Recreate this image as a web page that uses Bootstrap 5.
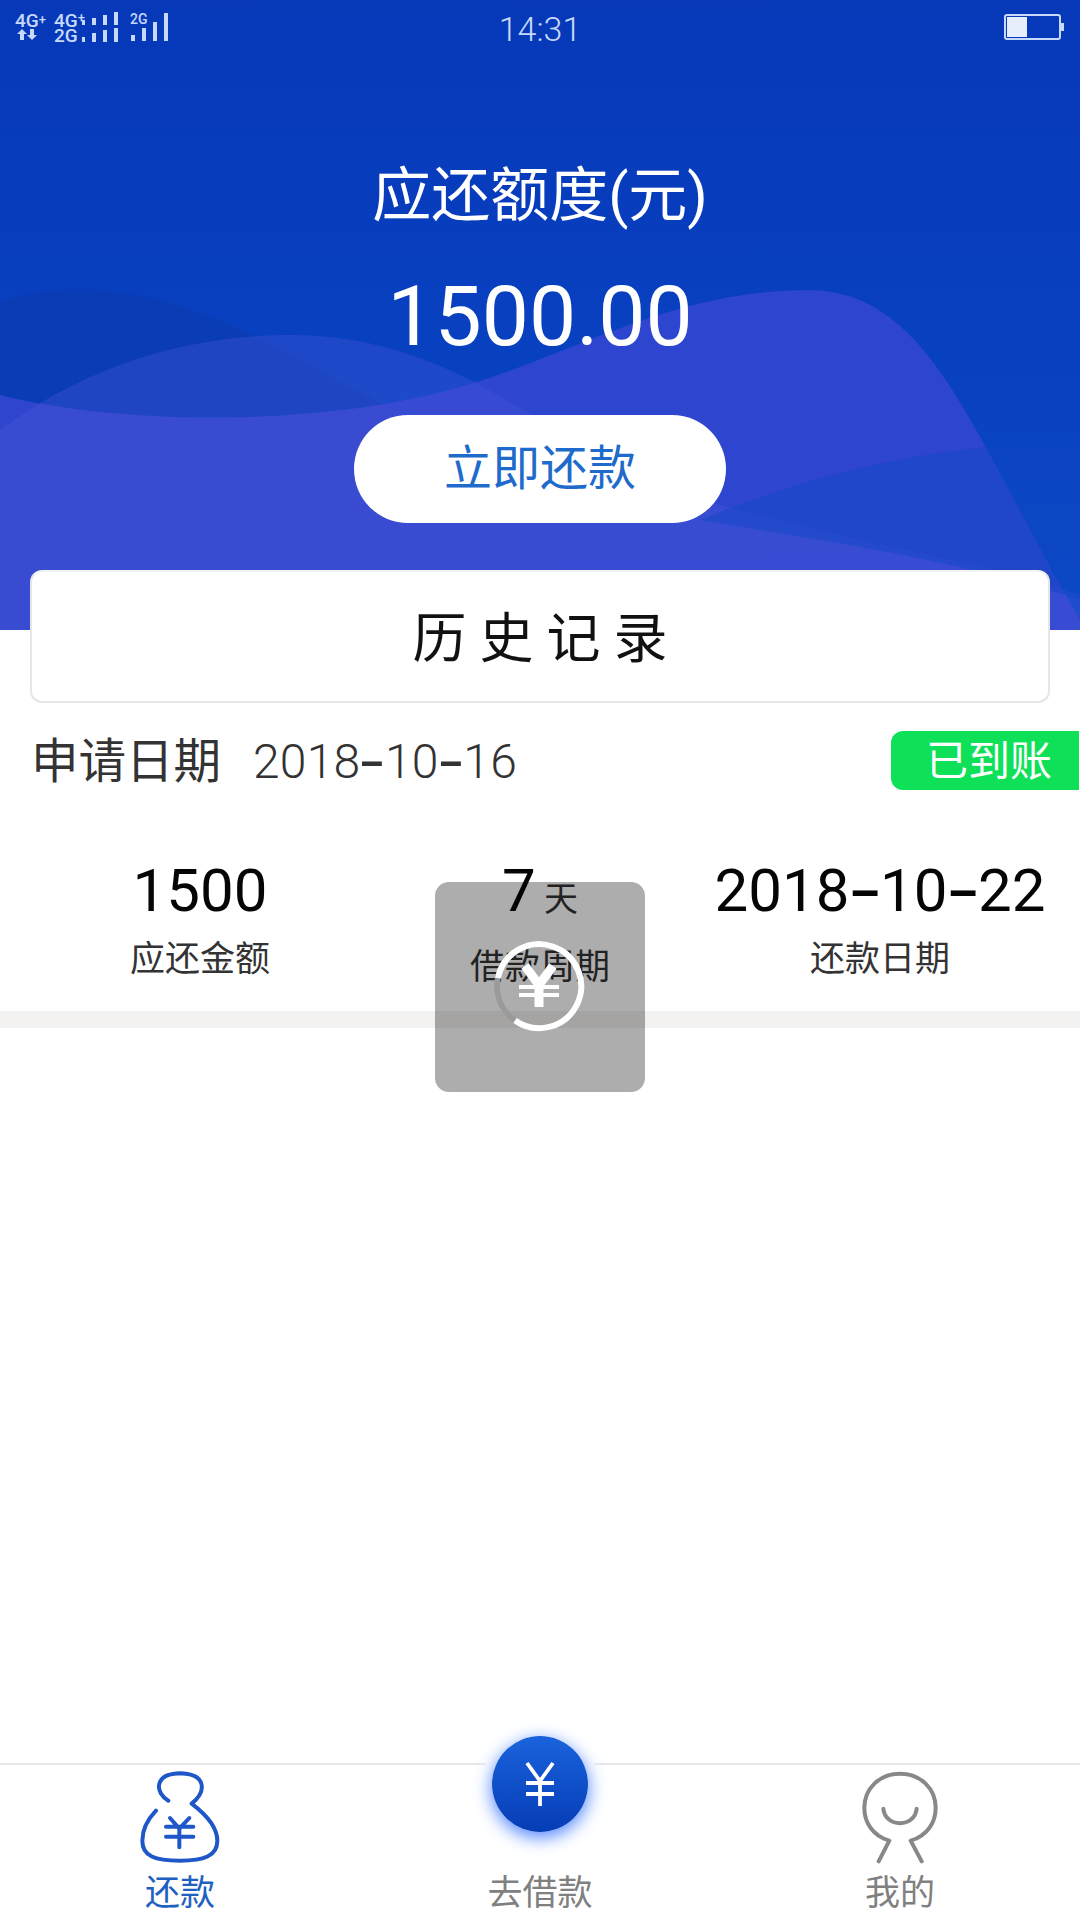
<!DOCTYPE html>
<html lang="zh-CN">
<head>
    <meta charset="UTF-8">
    <meta name="viewport" content="width=device-width, initial-scale=1.0">
    <title>还款</title>
    <link href="https://cdn.jsdelivr.net/npm/bootstrap@5.3.0/dist/css/bootstrap.min.css" rel="stylesheet">
    <style>
        body { font-family: Roboto, "Noto Sans CJK SC", sans-serif; background: #fff; height: 1920px; overflow: hidden; }
        .app-page { height: 1920px; }

        .hero { height: 630px; background: linear-gradient(180deg, #0638b8 0%, #0a48c6 100%); color: #fff; }
        .hero-waves { position: absolute; left: 0; top: 0; width: 1080px; height: 630px; }
        .hero-body { z-index: 1; }

        .status-line { height: 60px; color: #c6d9fb; }
        .status-side { width: 250px; }
        .status-time { font-size: 34px; font-weight: 300; padding-top: 4px; }

        .due-title { font-size: 59px; line-height: 80px; margin-top: 96px; font-weight: 400; }
        .due-amount { font-size: 84px; line-height: 100px; margin-top: 31px; font-weight: 400; }
        .repay-btn { width: 372px; height: 108px; margin-top: 48px; font-size: 48px; line-height: 108px; padding: 0; color: #1f6bcb; background: #fff; border: 0; border-radius: 54px; }

        .history-card { height: 133px; margin: -60px 30px 0; padding: 6px 0 0 13px; border: 2px solid #e6e6e6; border-top-color: #f3f3f3; border-radius: 12px; font-size: 54px; letter-spacing: 13px; color: #111; z-index: 2; }

        .record-head { margin-top: 28px; height: 59px; padding: 0 1px 0 31px; color: #333; }
        .record-text { padding-top: 4px; }
        .record-label { font-size: 47.500px; }
        .record-date { font-size: 48px; font-weight: 300; margin-left: 32px; color: #333; letter-spacing: .2px; }
        .wide-dash { display: inline-block; transform: scaleX(1.6); margin: 0 .085em; font-weight: 500; }
        .paid-tag { width: 188px; height: 59px; font-size: 42px; line-height: 62px; padding-left: 35px; background: #0ee157; color: #fff; border-radius: 12px 0 0 12px; }

        .stat-row { margin-top: 66px; padding: 0 30px; }
        .stat-cell { width: 340px; text-align: center; }
        .stat-num { font-size: 60px; line-height: 70px; color: #050505; }
        .stat-unit { font-size: 34px; color: #333; }
        .stat-label { font-size: 35px; line-height: 50px; margin-top: 9px; color: #333; }
        .split-band { height: 17px; margin-top: 18px; background: #f3f2f1; }

        .loading-toast { position: absolute; left: 435px; top: 882px; width: 210px; height: 210px; border-radius: 14px; background: rgba(0, 0, 0, .32); z-index: 5; }

        .tab-bar { height: 157px; border-top: 2px solid #e6e6e6; }
        .tab-cell { width: 360px; height: 155px; }
        .tab-text { position: absolute; left: 0; right: 0; top: 104px; font-size: 35px; line-height: 50px; text-align: center; color: #808080; }
        .tab-text-on { color: #2060c0; }
        .tab-icon { position: absolute; }
        .tab-bag { left: 130px; top: 3px; width: 100px; height: 100px; }
        .tab-person { left: 130px; top: 3px; width: 100px; height: 100px; }
        .borrow-halo { position: absolute; left: 122px; top: -38px; width: 116px; height: 116px; border-radius: 50%; background: #fff; box-shadow: 0 0 8px rgba(255, 255, 255, .9); }
        .borrow-btn { position: absolute; left: 132px; top: -29px; width: 96px; height: 96px; border-radius: 50%; background: linear-gradient(180deg, #1a63dc, #063db6); box-shadow: 0 5px 18px #4a80ff; }
    </style>
</head>
<body>
<div class="app-page d-flex flex-column position-relative">

    <div class="hero position-relative overflow-hidden">
        <svg class="hero-waves" viewBox="0 0 1080 630">
            <path d="M0 302 C60 280 140 285 230 325 C340 375 420 440 560 470 L560 630 L0 630 Z" fill="#0a3cb6"/>
            <path d="M0 395 C120 425 300 425 430 395 C560 365 660 290 810 290 C930 292 970 430 1080 620 L1080 630 L0 630 Z" fill="#3346d0" opacity=".9"/>
            <path d="M0 430 C80 370 180 335 290 335 C430 335 520 410 620 470 C760 530 950 550 1080 595 L1080 630 L0 630 Z" fill="#4a57da" opacity=".34"/>
            <path d="M700 520 C820 470 960 440 1080 445 L1080 600 C960 560 820 540 700 520 Z" fill="#0f46c4" opacity=".45"/>
        </svg>

        <div class="hero-body position-relative text-center">
            <div class="status-line d-flex justify-content-between">
                <div class="status-side text-start">
                    <svg width="180" height="60" viewBox="0 0 180 60" class="d-block">
                        <g fill="#c6d9fb" font-family="Roboto, sans-serif" font-weight="500">
                            <text x="15" y="27" font-size="19">4G<tspan font-size="13" dy="-3">+</tspan></text>
                            <text x="54" y="27" font-size="19">4G<tspan font-size="13" dy="-5">+</tspan></text>
                            <text x="54" y="42" font-size="19">2G</text>
                            <text x="130" y="24" font-size="14">2G</text>
                            <path d="M18 34 l5 -5 l5 5 h-3 v6 h-4 v-6 z M28 35 h3 v-6 h4 v6 h3 l-5 5 z" transform="translate(-1 0)"/>
                            <rect x="82" y="20" width="3" height="5"/><rect x="82" y="37" width="3" height="5"/>
                            <rect x="92" y="18" width="4" height="7"/><rect x="92" y="33" width="4" height="9"/>
                            <rect x="103" y="15" width="4" height="10"/><rect x="103" y="30" width="4" height="12"/>
                            <rect x="114" y="12" width="4" height="13"/><rect x="114" y="28" width="4" height="14"/>
                            <rect x="131" y="35" width="4" height="6"/><rect x="142" y="28" width="4" height="13"/>
                            <rect x="153" y="22" width="4" height="19"/><rect x="164" y="13" width="4" height="28"/>
                        </g>
                    </svg>
                </div>
                <div class="status-time">14:31</div>
                <div class="status-side d-flex justify-content-end">
                    <svg width="80" height="60" viewBox="1000 0 80 60" class="d-block">
                        <rect x="1005" y="15" width="55" height="24" rx="2" fill="none" stroke="#c6d9fb" stroke-width="2"/>
                        <rect x="1007" y="17" width="20" height="20" fill="#e6eefc"/>
                        <rect x="1061" y="23" width="3" height="8" fill="#c6d9fb"/>
                    </svg>
                </div>
            </div>
            <div class="due-title">应还额度(元)</div>
            <div class="due-amount">1500.00</div>
            <button type="button" class="btn repay-btn">立即还款</button>
        </div>
    </div>

    <div class="history-card card position-relative d-flex align-items-center justify-content-center">历史记录</div>

    <div class="record-head d-flex justify-content-between align-items-center">
        <div class="record-text"><span class="record-label">申请日期</span><span class="record-date">2018<span class="wide-dash">-</span>10<span class="wide-dash">-</span>16</span></div>
        <div class="paid-tag">已到账</div>
    </div>

    <div class="stat-row d-flex">
        <div class="stat-cell">
            <div class="stat-num">1500</div>
            <div class="stat-label">应还金额</div>
        </div>
        <div class="stat-cell">
            <div class="stat-num">7<span class="stat-unit"> 天</span></div>
            <div class="stat-label">借款周期</div>
        </div>
        <div class="stat-cell">
            <div class="stat-num">2018<span class="wide-dash">-</span>10<span class="wide-dash">-</span>22</div>
            <div class="stat-label">还款日期</div>
        </div>
    </div>
    <div class="split-band"></div>

    <div class="flex-grow-1"></div>

    <div class="tab-bar d-flex">
        <div class="tab-cell position-relative">
            <svg class="tab-icon tab-bag" viewBox="105 80 270 300">
                <g fill="none" stroke="#1f57c8" stroke-width="12" stroke-linecap="round" stroke-linejoin="round">
                    <path d="M205 178 C165 155 160 98 240 96 C320 98 320 150 275 187 C325 225 352 260 352 298 C352 345 310 358 240 358 C165 358 127 345 127 298 C127 260 145 232 168 208"/>
                    <path d="M210 230 L238 262 L268 230 M198 256 H280 M198 286 H280 M238 262 V318"/>
                </g>
            </svg>
            <div class="tab-text tab-text-on">还款</div>
        </div>
        <div class="tab-cell position-relative">
            <div class="borrow-halo"></div>
            <div class="borrow-btn d-flex align-items-center justify-content-center">
                <svg width="32" height="46" viewBox="0 0 32 46">
                    <path d="M3 2 L16 20 L29 2 M2 22 H30 M2 33 H30 M16 20 V45" fill="none" stroke="#fff" stroke-width="3.800"/>
                </svg>
            </div>
            <div class="tab-text">去借款</div>
        </div>
        <div class="tab-cell position-relative">
            <svg class="tab-icon tab-person" viewBox="150 80 300 300">
                <g fill="none" stroke="#888" stroke-width="12" stroke-linecap="round" stroke-linejoin="round">
                    <path d="M236 360 L268 298 C215 282 193 240 193 200 C193 140 240 97 300 97 C360 97 407 140 407 200 C407 240 385 282 332 298 L365 360"/>
                    <path d="M250 202 C255 260 345 260 350 202"/>
                </g>
            </svg>
            <div class="tab-text">我的</div>
        </div>
    </div>

    <div class="loading-toast d-flex align-items-center justify-content-center">
        <svg width="96" height="96" viewBox="0 0 96 96">
            <circle cx="47" cy="47" r="42" fill="none" stroke="#9a9a9a" stroke-width="5.500"/>
            <path d="M6 39 A42 42 0 1 1 23 81.500" fill="none" stroke="#fff" stroke-width="6"/>
            <path d="M33 27 L47 46 L61 27 M47 46 V68" fill="none" stroke="#fff" stroke-width="9"/>
            <path d="M27 48 H67 M27 56 H67" fill="none" stroke="#fff" stroke-width="4"/>
        </svg>
    </div>
</div>

<script src="https://cdn.jsdelivr.net/npm/bootstrap@5.3.0/dist/js/bootstrap.bundle.min.js"></script>
</body>
</html>
